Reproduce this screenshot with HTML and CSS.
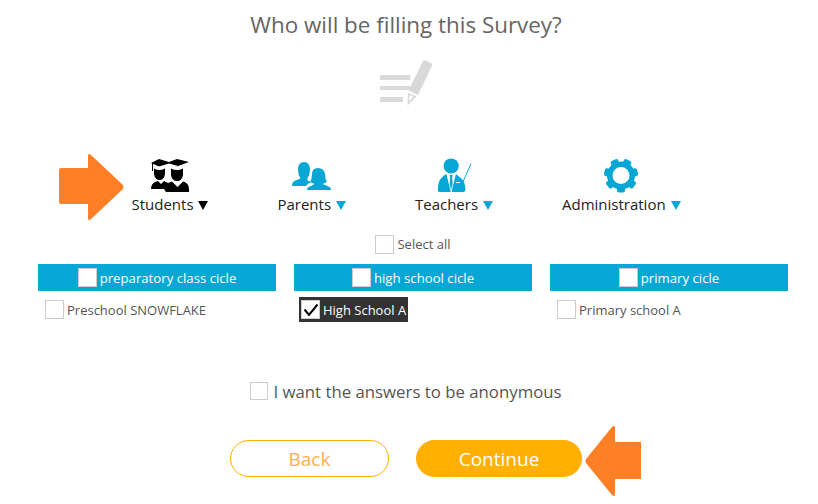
FILE: index.html
```html
<!DOCTYPE html>
<html lang="en">
<head>
    <meta charset="UTF-8">
    <title>Survey</title>
    <link rel="stylesheet" href="styles.css">
</head>
<body>
    <div class="page">
        <h1 class="title">Who will be filling this Survey?</h1>

        <svg class="survey-icon" width="54" height="48" viewBox="0 0 54 48">
            <rect x="0" y="17" width="30" height="5" fill="#d9d9d9"/>
            <rect x="0" y="28" width="30" height="4" fill="#d9d9d9"/>
            <rect x="0" y="39" width="23" height="5" fill="#d9d9d9"/>
            <path d="M43 3 Q44 1.500 46 2.500 L51 5 Q52.500 6 52 8 L38 37 L28.500 32.500Z" fill="#d9d9d9"/>
            <path d="M28 34.500 L36.500 38.500 L27.500 47.500Z M29.500 37 L29 43 L33.500 39Z" fill="#d9d9d9" fill-rule="evenodd"/>
        </svg>

        <!-- Groups -->
        <div class="groups">
            <div class="group">
                <svg class="group-icon" width="38" height="38" viewBox="0 0 38 38">
                    <path d="M0 7 L8 3 L18 6 L26 3 L38 6 L27 10 L18 7.500 L8 10.500Z" fill="#000"/>
                    <path d="M1.500 7 V15" stroke="#000" stroke-width="1"/>
                    <path d="M3 12 Q8 9 14 12 L14 18 Q13 24 8.500 24 Q4 24 3 18Z" fill="#000"/>
                    <path d="M20 12 Q26 9 32 12 L32 19 Q31 25 26 25 Q21 25 20 19Z" fill="#000"/>
                    <path d="M3 12.500 Q8 15.500 14 12.500 L14 11.500 Q8 9 3 11.500Z M20 12.500 Q26 15.500 32 12.500 L32 11.500 Q26 9 20 11.500Z" fill="#fff"/>
                    <path d="M0 33 Q0 28 4 26 L7 25 L10 28 L13 25 L17 27 L21 25.500 L26.500 31 L32 25.500 Q38 27 38 33 V36 H15 L13 33Z" fill="#000"/>
                </svg>
                <div class="group-name">Students <span class="caret"></span></div>
            </div>
            <div class="group">
                <svg class="group-icon" width="39" height="38" viewBox="0 0 39 38">
                    <path d="M12 6 Q18 6 18 14 Q18 19 15.500 22 L15.500 24.500 L19 26 Q15 28 14 30 L0 30 Q0 25.500 3.500 24.500 L8.500 22.500 Q6 19 6 14 Q6 6 12 6Z" fill="#06a7d4"/>
                    <path d="M26 12 Q32 12 33 18 Q33 23 35 26 L30.500 28 L35.500 30 Q39 31 39 34 L15 34 Q15 31 19 30 L22.500 28 L18 26 Q20 23 20 18 Q20 12 26 12Z" fill="#06a7d4"/>
                </svg>
                <div class="group-name">Parents <span class="caret caret-blue"></span></div>
            </div>
            <div class="group">
                <svg class="group-icon" width="38" height="40" viewBox="0 0 38 40">
                    <circle cx="16" cy="10.500" r="8" fill="#06a7d4"/>
                    <path d="M11 19 L16 38 L4 38 Q2 38 2 35 Q2 23 11 19Z" fill="#06a7d4"/>
                    <path d="M21 19 L16 38 L28 38 Q31 38 31 35 Q31 28 27 24Z" fill="#06a7d4"/>
                    <path d="M14.500 20 H17.500 L17 23 L18 31 L16 36 L14 31 L15 23Z" fill="#06a7d4"/>
                    <path d="M12 19.500 L16 38 L20 19.500" fill="none" stroke="#fff" stroke-width=".7"/>
                    <path d="M21 28 H25.500" stroke="#fff" stroke-width="1"/>
                    <path d="M28.500 27 L37 8" stroke="#06a7d4" stroke-width="1"/>
                </svg>
                <div class="group-name">Teachers <span class="caret caret-blue"></span></div>
            </div>
            <div class="group">
                <svg class="group-icon" width="36" height="38" viewBox="0 0 36 38">
                    <circle cx="18" cy="19.500" r="11.250" fill="none" stroke="#06a7d4" stroke-width="5.500"/>
                    <g fill="#06a7d4">
                        <rect x="14" y="2.500" width="8" height="6" rx="2" transform="rotate(25.700 18 19.500)"/>
                        <rect x="14" y="2.500" width="8" height="6" rx="2" transform="rotate(77.100 18 19.500)"/>
                        <rect x="14" y="2.500" width="8" height="6" rx="2" transform="rotate(128.600 18 19.500)"/>
                        <rect x="14" y="2.500" width="8" height="6" rx="2" transform="rotate(180 18 19.500)"/>
                        <rect x="14" y="2.500" width="8" height="6" rx="2" transform="rotate(231.400 18 19.500)"/>
                        <rect x="14" y="2.500" width="8" height="6" rx="2" transform="rotate(282.900 18 19.500)"/>
                        <rect x="14" y="2.500" width="8" height="6" rx="2" transform="rotate(334.300 18 19.500)"/>
                    </g>
                </svg>
                <div class="group-name">Administration <span class="caret caret-blue"></span></div>
            </div>
        </div>

        <!-- Cycles -->
        <div class="cycles">
            <div class="select-all"><span class="check"></span>Select all</div>
            <div class="cycle-grid">
                <div class="cycle">
                    <div class="cycle-head"><span class="check"></span>preparatory class cicle</div>
                    <div class="school"><span class="school-label"><span class="check"></span>Preschool SNOWFLAKE</span></div>
                </div>
                <div class="cycle">
                    <div class="cycle-head"><span class="check"></span>high school cicle</div>
                    <div class="school"><span class="school-label school-selected"><span class="check">
                        <svg width="18" height="18" viewBox="0 0 18 18"><path d="M2.500 8.500 L7 14 L15.500 3.500" fill="none" stroke="#000" stroke-width="2"/></svg>
                    </span>High School A</span></div>
                </div>
                <div class="cycle">
                    <div class="cycle-head"><span class="check"></span>primary cicle</div>
                    <div class="school"><span class="school-label"><span class="check"></span>Primary school A</span></div>
                </div>
            </div>
        </div>

        <div class="anonymous"><span class="check"></span>I want the answers to be anonymous</div>

        <div class="actions">
            <a class="btn btn-back">Back</a>
            <a class="btn btn-continue">Continue</a>
        </div>

        <!-- Orange pointers laid over the page -->
        <svg class="pointer pointer-students" width="66" height="68" viewBox="0 0 66 68">
            <path d="M2 15 H29 V2 Q30 0 32 2 L64 32 Q65 34 64 36 L32 66 Q30 68 29 66 V51 H2 Q0 51 0 49 V17 Q0 15 2 15Z" fill="#ff7f27"/>
        </svg>
        <svg class="pointer pointer-continue" width="57" height="72" viewBox="0 0 57 72">
            <path d="M56 17 H30 V2 Q29 0 27 2 L1 34 Q0 36 1 38 L27 70 Q29 72 30 70 V54 H56Z" fill="#ff7f27"/>
        </svg>
    </div>
</body>
</html>
```

FILE: styles.css
```css
* {
    box-sizing: border-box;
}

body {
    margin: 0;
    font-family: "Open Sans", sans-serif;
    color: #333;
    background: #fff;
}

.page {
    position: relative;
    width: 818px;
    height: 504px;
    overflow: hidden;
}

.title {
    width: 812px;
    margin: 0;
    padding-top: 8px;
    font-size: 22.4px;
    font-weight: 400;
    line-height: 33px;
    text-align: center;
    color: #666;
}

.survey-icon {
    display: block;
    margin: 17px 0 0 380px;
}

/* Groups */
.groups {
    display: flex;
    justify-content: center;
    gap: 69px;
    width: 812px;
    margin-top: 50px;
}

.group {
    display: flex;
    flex-direction: column;
    align-items: center;
    height: 58px;
}

.group-icon {
    display: block;
    flex: none;
    height: 38px;
}

.group-name {
    font-size: 15px;
    line-height: 20px;
    color: #222;
    white-space: nowrap;
}

.caret {
    display: inline-block;
    width: 0;
    height: 0;
    margin-left: 1px;
    border-left: 5px solid transparent;
    border-right: 5px solid transparent;
    border-top: 9px solid #000;
}

.caret-blue {
    border-top-color: #06a7d4;
}

/* Checkbox */
.check {
    display: inline-block;
    flex: none;
    width: 19px;
    height: 19px;
    margin-right: 3px;
    border: 1px solid #ccc;
    background: #fff;
}

.check svg {
    display: block;
}

/* Cycles */
.cycles {
    width: 750px;
    margin: 20px 0 0 38px;
}

.select-all {
    display: flex;
    align-items: center;
    justify-content: center;
    height: 20px;
    font-size: 13px;
    color: #555;
}

.cycle-grid {
    display: grid;
    grid-template-columns: repeat(3, 238px);
    gap: 18px;
    margin-top: 10px;
}

.cycle-head {
    display: flex;
    align-items: center;
    justify-content: center;
    height: 27px;
    font-size: 13.2px;
    color: #fff;
    background: #06a7d4;
}

.school {
    display: flex;
    height: 32px;
    padding: 6px 0 0 7px;
    font-size: 13px;
    color: #555;
}

.school-label {
    display: flex;
    align-items: center;
    height: 25px;
}

.school-selected {
    margin-left: -2px;
    padding: 0 2px;
    color: #fff;
    background: #333;
}

/* Bottom */
.anonymous {
    display: flex;
    align-items: center;
    justify-content: center;
    width: 812px;
    height: 20px;
    margin-top: 58px;
    font-size: 16.8px;
    color: #555;
}

.anonymous .check {
    width: 18px;
    height: 18px;
    margin-right: 5px;
}

.actions {
    display: flex;
    justify-content: center;
    gap: 27px;
    width: 812px;
    margin-top: 39px;
}

.btn {
    display: flex;
    align-items: center;
    justify-content: center;
    height: 37px;
    border-radius: 19px;
    font-size: 19px;
}

.btn-back {
    width: 159px;
    border: 1px solid #ffb000;
    color: #ffb04a;
}

.btn-continue {
    width: 166px;
    color: #fff;
    background: #ffb000;
}

/* Pointers */
.pointer {
    position: absolute;
}

.pointer-students {
    left: 59px;
    top: 153px;
}

.pointer-continue {
    left: 585px;
    top: 425px;
}
```
